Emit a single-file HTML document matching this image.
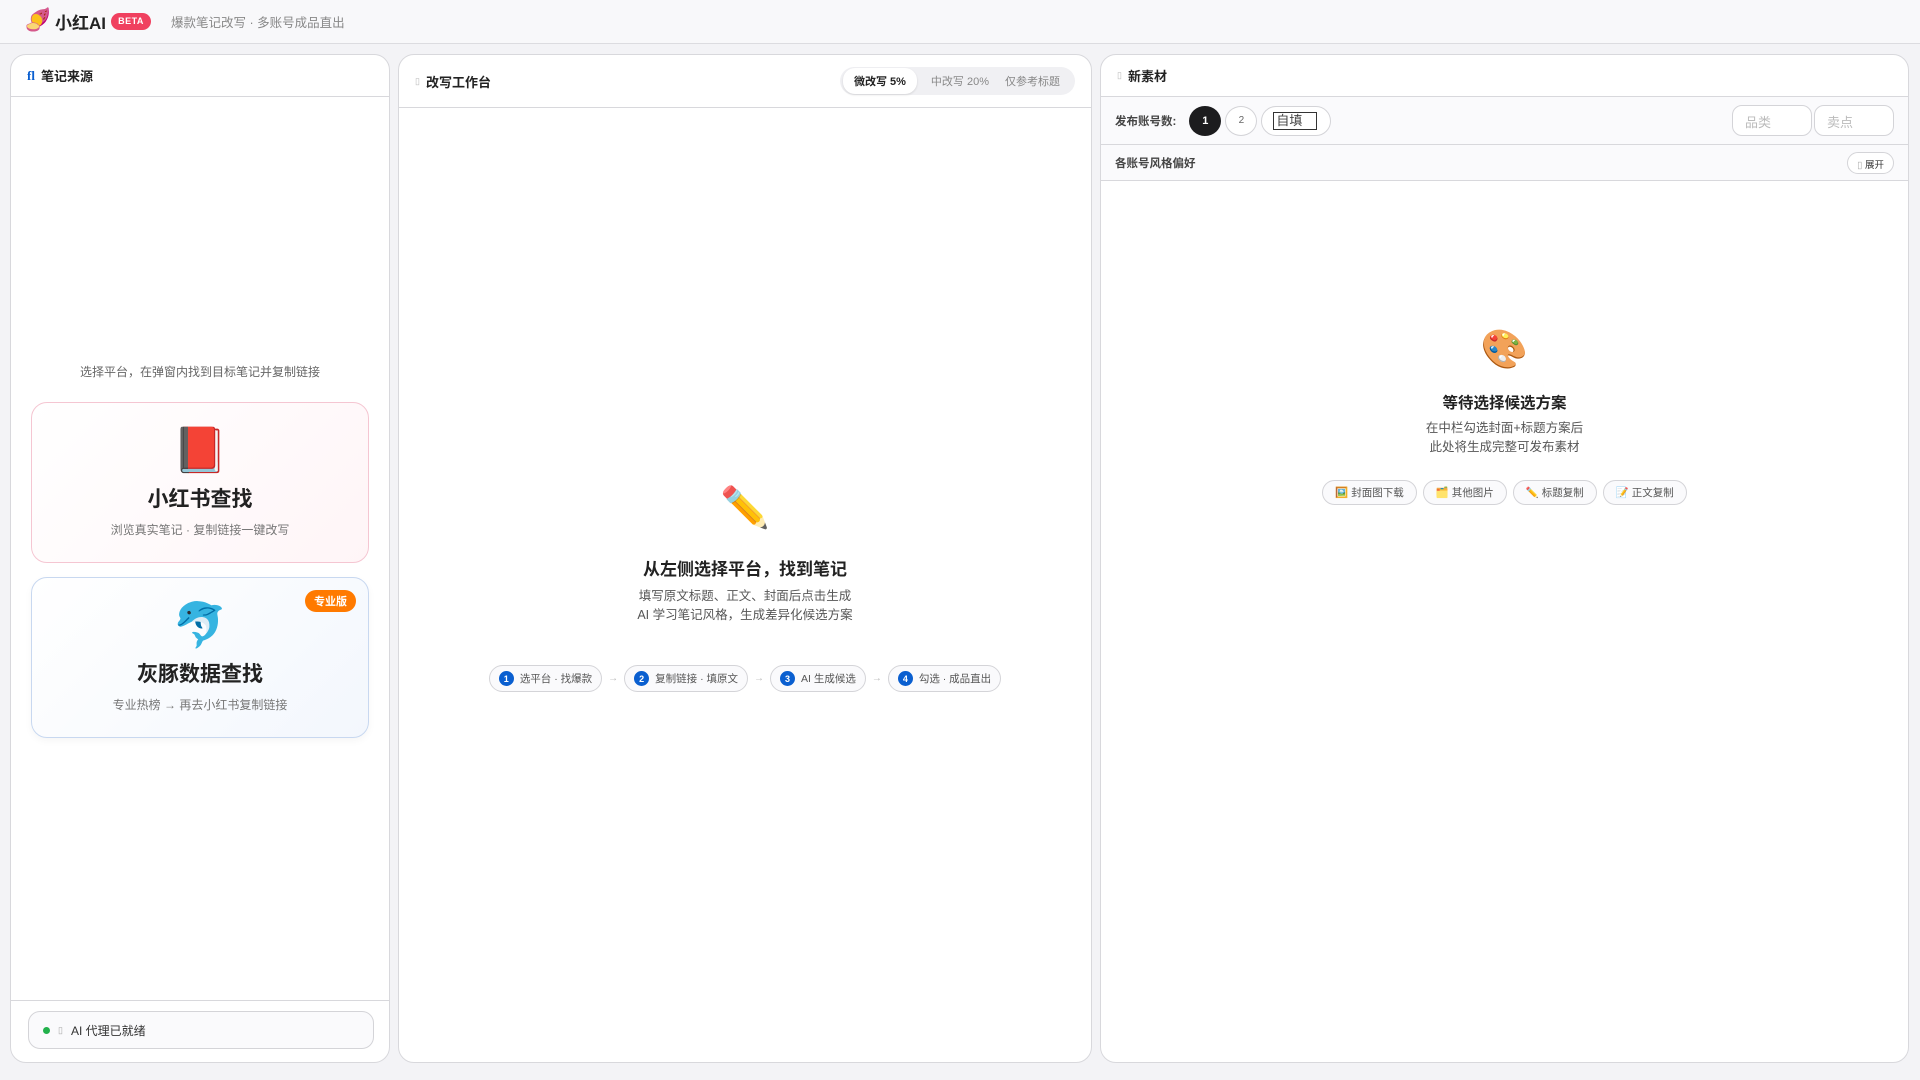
<!DOCTYPE html>
<html><head><meta charset="utf-8"><style>
*{box-sizing:border-box;margin:0;padding:0}
body{width:1920px;height:1080px;background:#f3f3f6;font-family:"Liberation Sans","Noto Sans CJK SC",sans-serif;color:#222;position:relative;overflow:hidden}
.top{position:absolute;left:0;top:0;width:1920px;height:44px;background:#f8f8fa;border-bottom:1px solid #dcdce0}
.panel{position:absolute;top:54px;height:1009px;background:#fff;border:1px solid #d8d8dc;border-radius:16px;overflow:hidden}
.ph{height:42px;border-bottom:1px solid #d8d8dc;display:flex;align-items:center;padding-left:16px;font-size:13px;font-weight:bold}
.ph .ic{color:#bbb;font-size:9px;margin-right:6px;font-weight:normal}
.pill{display:inline-flex;align-items:center;border:1px solid #d4d4d8;border-radius:14px;height:27px;padding:0 9px;font-size:10.5px;color:#555;background:#fafafc}
.num{display:inline-flex;width:15px;height:15px;border-radius:50%;background:#0a5fd0;color:#fff;font-size:9px;font-weight:bold;align-items:center;justify-content:center;margin-right:6px}
.arr{color:#bbb;font-size:10px;margin:0 6px}
.card{position:absolute;left:20px;width:338px;height:161px;border-radius:16px;text-align:center}
</style></head><body>
<div class="top">
<span style="position:absolute;left:24px;top:7px;font-size:22px">🍠</span>
<span style="position:absolute;left:55px;top:9px;font-size:17px;font-weight:bold">小红AI</span>
<span style="position:absolute;left:111px;top:13px;width:40px;height:17px;border-radius:9px;background:#f0405f;color:#fff;font-size:9px;font-weight:bold;text-align:center;line-height:17px;letter-spacing:.5px">BETA</span>
<span style="position:absolute;left:171px;top:12px;font-size:12.5px;color:#888">爆款笔记改写 · 多账号成品直出</span>
</div>

<div class="panel" style="left:10px;width:380px">
<div class="ph"><span style="color:#0a5fd0;margin-right:6px;font-family:'Liberation Serif'">fl</span>笔记来源</div>
<div style="position:absolute;top:308px;width:100%;text-align:center;font-size:12px;color:#666">选择平台，在弹窗内找到目标笔记并复制链接</div>
<div class="card" style="top:347px;border:1px solid #f5c6d2;background:linear-gradient(135deg,#fff,#fff5f7)">
<div style="font-size:44px;margin-top:26px;line-height:1">📕</div>
<div style="font-size:21px;font-weight:bold;margin-top:10px">小红书查找</div>
<div style="font-size:12px;color:#777;margin-top:8px">浏览真实笔记 · 复制链接一键改写</div>
</div>
<div class="card" style="top:522px;border:1px solid #c8d8f0;background:linear-gradient(135deg,#fff,#f3f7fd);box-shadow:0 3px 8px rgba(0,0,0,.04)">
<span style="position:absolute;right:12px;top:12px;background:#ff7a00;color:#fff;font-size:11px;font-weight:bold;border-radius:11px;padding:3px 9px">专业版</span>
<div style="font-size:44px;margin-top:26px;line-height:1">🐬</div>
<div style="font-size:21px;font-weight:bold;margin-top:10px">灰豚数据查找</div>
<div style="font-size:12px;color:#777;margin-top:8px">专业热榜 → 再去小红书复制链接</div>
</div>
<div style="position:absolute;left:0;top:945px;width:100%;border-top:1px solid #d8d8dc"></div>
<div style="position:absolute;left:17px;top:956px;width:346px;height:38px;border:1px solid #d4d4d8;border-radius:12px;background:#fafafc;display:flex;align-items:center;padding-left:14px;font-size:12px;color:#333">
<span style="width:7px;height:7px;border-radius:50%;background:#22b14c;margin-right:8px"></span><span style="color:#aaa;font-size:9px;margin-right:8px">▯</span>AI 代理已就绪</div>
</div>

<div class="panel" style="left:398px;width:694px">
<div class="ph" style="height:53px"><span class="ic">▯</span>改写工作台
<div style="position:absolute;right:16px;top:12px;height:28px;background:#f0f0f3;border-radius:14px;display:flex;align-items:center;padding:0 3px;font-size:11px;color:#888;font-weight:normal">
<span style="background:#fff;border-radius:12px;padding:5px 11px;color:#222;font-weight:bold;box-shadow:0 1px 2px rgba(0,0,0,.12)">微改写 5%</span>
<span style="padding:0 16px 0 14px">中改写 20%</span><span style="padding:0 12px 0 0">仅参考标题</span></div></div>
<div style="position:absolute;top:433px;width:100%;text-align:center;font-size:40px;line-height:1">✏️</div>
<div style="position:absolute;top:500px;width:100%;text-align:center;font-size:17px;font-weight:bold">从左侧选择平台，找到笔记</div>
<div style="position:absolute;top:532px;width:100%;text-align:center;font-size:12.5px;color:#555;line-height:19px">填写原文标题、正文、封面后点击生成<br>AI 学习笔记风格，生成差异化候选方案</div>
<div style="position:absolute;top:610px;width:100%;display:flex;justify-content:center;align-items:center">
<span class="pill"><span class="num">1</span>选平台 · 找爆款</span><span class="arr">→</span>
<span class="pill"><span class="num">2</span>复制链接 · 填原文</span><span class="arr">→</span>
<span class="pill"><span class="num">3</span>AI 生成候选</span><span class="arr">→</span>
<span class="pill"><span class="num">4</span>勾选 · 成品直出</span></div>
</div>

<div class="panel" style="left:1100px;width:809px">
<div class="ph"><span class="ic">▯</span>新素材</div>
<div style="height:48px;background:#fafafc;border-bottom:1px solid #d8d8dc;display:flex;align-items:center;padding-left:14px;font-size:11.5px;color:#444;font-weight:bold;position:relative">发布账号数:
<span style="margin-left:13px;width:32px;height:30px;border-radius:50%;background:#1c1c1e;color:#fff;display:inline-flex;align-items:center;justify-content:center;font-size:11px">1</span>
<span style="margin-left:4px;width:32px;height:30px;border-radius:50%;border:1px solid #d4d4d8;background:#fff;color:#666;display:inline-flex;align-items:center;justify-content:center;font-size:10px;font-weight:normal">2</span>
<span style="margin-left:4px;width:70px;height:30px;border-radius:15px;border:1px solid #d4d4d8;background:#fff;display:inline-flex;align-items:center;padding-left:11px;font-weight:normal"><span style="border:1px solid #333;padding:0 2px;width:44px;font-size:13px;line-height:16px">自填</span></span>
<span style="position:absolute;right:96px;top:8px;width:80px;height:31px;border:1px solid #d4d4d8;border-radius:10px;background:#fff;font-size:13px;color:#bbb;font-weight:normal;padding:6px 12px">品类</span>
<span style="position:absolute;right:14px;top:8px;width:80px;height:31px;border:1px solid #d4d4d8;border-radius:10px;background:#fff;font-size:13px;color:#bbb;font-weight:normal;padding:6px 12px">卖点</span>
</div>
<div style="height:36px;background:#fafafc;border-bottom:1px solid #d8d8dc;display:flex;align-items:center;padding-left:14px;font-size:11.5px;color:#444;font-weight:bold;position:relative">各账号风格偏好
<span style="position:absolute;right:14px;top:7px;height:22px;border:1px solid #d4d4d8;border-radius:11px;background:#fff;font-size:9.5px;font-weight:normal;padding:4px 9px;color:#333"><span style="color:#aaa">▯</span> 展开</span></div>
<div style="position:absolute;top:276px;width:100%;text-align:center;font-size:38px;line-height:1">🎨</div>
<div style="position:absolute;top:336px;width:100%;text-align:center;font-size:15.5px;font-weight:bold">等待选择候选方案</div>
<div style="position:absolute;top:364px;width:100%;text-align:center;font-size:12.5px;color:#555;line-height:19px">在中栏勾选封面+标题方案后<br>此处将生成完整可发布素材</div>
<div style="position:absolute;top:425px;width:100%;display:flex;justify-content:center;gap:6px">
<span class="pill" style="height:25px;padding:0 12px">🖼️ 封面图下载</span><span class="pill" style="height:25px;padding:0 12px">🗂️ 其他图片</span><span class="pill" style="height:25px;padding:0 12px">✏️ 标题复制</span><span class="pill" style="height:25px;padding:0 12px">📝 正文复制</span></div>
</div>
</body></html>
